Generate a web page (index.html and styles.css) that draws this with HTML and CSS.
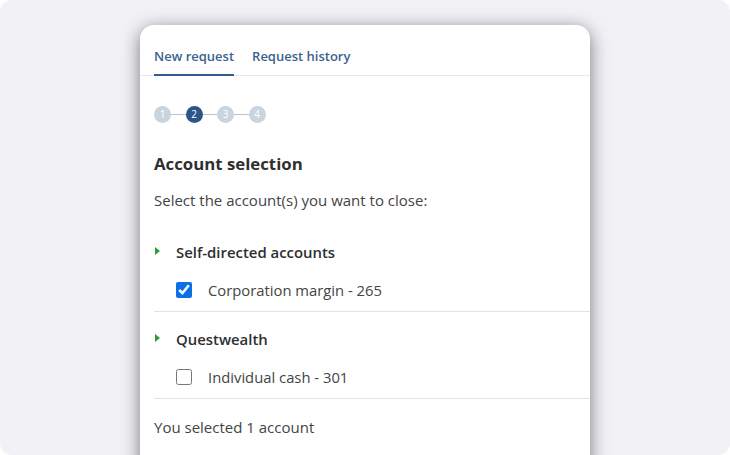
FILE: index.html
```html
<!DOCTYPE html>
<html lang="en">
<head>
<meta charset="utf-8">
<title>Close accounts</title>
<link rel="stylesheet" href="styles.css">
</head>
<body>
<div class="stage">
  <section class="card">
    <nav class="tabs">
      <a class="tab active">New request</a>
      <a class="tab">Request history</a>
    </nav>
    <div class="content">
      <ol class="stepper">
        <li class="step">1</li>
        <li class="link"></li>
        <li class="step current">2</li>
        <li class="link"></li>
        <li class="step">3</li>
        <li class="link"></li>
        <li class="step">4</li>
      </ol>
      <h2 class="title">Account selection</h2>
      <p class="lead">Select the account(s) you want to close:</p>

      <div class="group">
        <div class="group-head">
          <span class="caret"></span>
          <span class="group-name">Self-directed accounts</span>
        </div>
        <label class="account">
          <input type="checkbox" class="check" checked>
          <span>Corporation margin - 265</span>
        </label>
      </div>

      <div class="group">
        <div class="group-head">
          <span class="caret"></span>
          <span class="group-name">Questwealth</span>
        </div>
        <label class="account">
          <input type="checkbox" class="check">
          <span>Individual cash - 301</span>
        </label>
      </div>

      <p class="summary">You selected 1 account</p>
    </div>
  </section>
</div>
</body>
</html>
```

FILE: styles.css
```css
* { box-sizing: border-box; }

html, body {
  margin: 0;
  height: 100%;
  background: #ffffff;
  overflow: hidden;
}

body {
  font-family: "Open Sans", "Noto Sans", sans-serif;
  color: #3b3b3b;
}

.stage {
  height: 455px;
  background: #f1f1f6;
  border-radius: 12px;
  padding-top: 25px;
  display: flex;
  justify-content: center;
  overflow: hidden;
}

.card {
  width: 450px;
  height: 460px;
  background: #ffffff;
  border-radius: 14px 14px 0 0;
  box-shadow: 0 4px 18px rgba(20, 20, 30, 0.55);
}

.tabs {
  display: flex;
  gap: 18px;
  padding: 0 14px;
  border-bottom: 1px solid #e7e9ed;
  height: 51px;
  align-items: flex-end;
}

.tab {
  font-size: 13px;
  font-weight: 600;
  color: #3a6291;
  padding-bottom: 9px;
  border-bottom: 2px solid transparent;
  margin-bottom: -1px;
  line-height: 18px;
}

.tab.active {
  border-bottom-color: #2f5d92;
}

.content {
  padding: 29px 0 0 14px;
}

.stepper {
  list-style: none;
  margin: 0;
  padding: 0;
  display: flex;
  align-items: center;
  height: 18px;
}

.step {
  width: 17px;
  height: 17px;
  border-radius: 50%;
  background: #cad4df;
  color: #ffffff;
  font-size: 10px;
  line-height: 17px;
  text-align: center;
  font-weight: 500;
}

.step.current {
  background: #2c5588;
}

.link {
  width: 14.5px;
  height: 1px;
  background: #b9c3cf;
}

.title {
  margin: 29px 0 0;
  font-size: 16.8px;
  font-weight: 700;
  line-height: 24px;
  color: #2f2f2f;
}

.lead {
  margin: 14px 0 0;
  font-size: 15px;
  line-height: 20px;
  color: #444444;
}

.group {
  border-bottom: 1px solid #dfe4ea;
}

.group-head {
  display: flex;
  align-items: center;
  height: 24px;
  margin-top: 30px;
}

.group + .group .group-head {
  margin-top: 15px;
}

.caret {
  width: 0;
  height: 0;
  border-top: 4px solid transparent;
  border-bottom: 4px solid transparent;
  border-left: 5px solid #2e9a3a;
  margin: 0 16px 2px 1px;
}

.group-name {
  font-size: 14.9px;
  font-weight: 600;
  color: #2f2f2f;
}

.account {
  display: flex;
  align-items: center;
  gap: 16px;
  padding: 16px 0 11px 22px;
  font-size: 14.8px;
  color: #444444;
  line-height: 20px;
}

.check {
  margin: 0;
  width: 16px;
  height: 16px;
  accent-color: #0b6fe8;
}

.summary {
  margin: 18px 0 0;
  font-size: 15px;
  line-height: 20px;
  color: #444444;
}
```
